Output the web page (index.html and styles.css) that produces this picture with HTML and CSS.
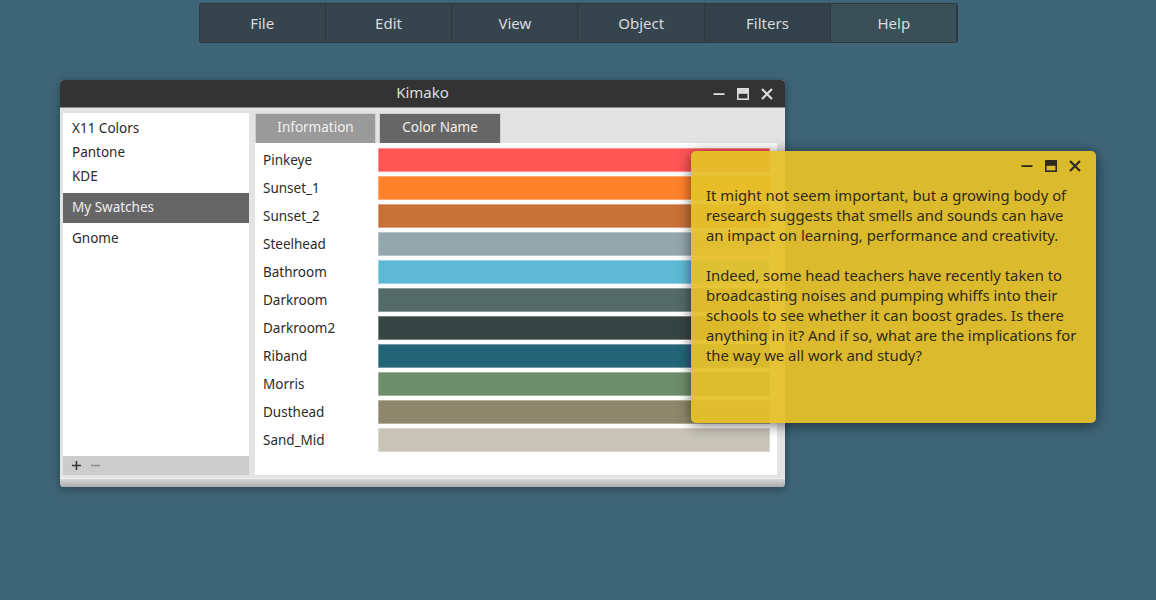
FILE: index.html
```html
<!DOCTYPE html>
<html>
<head>
<meta charset="utf-8">
<link rel="stylesheet" href="styles.css">
</head>
<body>
<div class="desktop">
  <nav class="menubar">
    <div class="menu-item">File</div>
    <div class="menu-item">Edit</div>
    <div class="menu-item">View</div>
    <div class="menu-item">Object</div>
    <div class="menu-item menu-active">Filters</div>
    <div class="menu-item menu-help">Help</div>
  </nav>

  <section class="window">
    <header class="titlebar">
      <span class="title">Kimako</span>
      <div class="controls light">
        <svg class="ctl" viewBox="0 0 14 14"><rect x="1.5" y="6.2" width="11" height="1.8" fill="currentColor"/></svg>
        <svg class="ctl" viewBox="0 0 14 14"><rect x="1.8" y="1.8" width="10.4" height="10.4" fill="none" stroke="currentColor" stroke-width="1.6"/><rect x="1.8" y="1.8" width="10.4" height="5" fill="currentColor"/></svg>
        <svg class="ctl" viewBox="0 0 14 14"><path d="M2 2 L12 12 M12 2 L2 12" stroke="currentColor" stroke-width="2.2" fill="none"/></svg>
      </div>
    </header>
    <div class="win-body">
      <aside class="sidebar">
        <ul class="lib-list">
          <li>X11 Colors</li>
          <li>Pantone</li>
          <li>KDE</li>
          <li class="selected">My Swatches</li>
          <li>Gnome</li>
        </ul>
        <div class="side-tools">
          <svg class="tool" viewBox="0 0 12 12"><path d="M6 1 V11 M1 6 H11" stroke="currentColor" stroke-width="1.6" fill="none"/></svg>
          <svg class="tool dim" viewBox="0 0 12 12"><path d="M1 6 H11" stroke="currentColor" stroke-width="1.4" fill="none"/></svg>
        </div>
      </aside>
      <div class="main">
        <div class="tabs">
          <div class="tab tab-info">Information</div>
          <div class="tab tab-name">Color Name</div>
        </div>
        <div class="swatches">
          <div class="row"><span class="name">Pinkeye</span><span class="sw" style="background:#ff5555"></span></div>
          <div class="row"><span class="name">Sunset_1</span><span class="sw" style="background:#ff822a"></span></div>
          <div class="row"><span class="name">Sunset_2</span><span class="sw" style="background:#c87137"></span></div>
          <div class="row"><span class="name">Steelhead</span><span class="sw" style="background:#93a7ad"></span></div>
          <div class="row"><span class="name">Bathroom</span><span class="sw" style="background:#5ebad4"></span></div>
          <div class="row"><span class="name">Darkroom</span><span class="sw" style="background:#536a67"></span></div>
          <div class="row"><span class="name">Darkroom2</span><span class="sw" style="background:#374542"></span></div>
          <div class="row"><span class="name">Riband</span><span class="sw" style="background:#236577"></span></div>
          <div class="row"><span class="name">Morris</span><span class="sw" style="background:#6e8e6b"></span></div>
          <div class="row"><span class="name">Dusthead</span><span class="sw" style="background:#8f876b"></span></div>
          <div class="row"><span class="name">Sand_Mid</span><span class="sw" style="background:#c8c4b7"></span></div>
        </div>
      </div>
    </div>
    <div class="win-foot"></div>
  </section>

  <section class="note">
    <div class="controls dark note-controls">
      <svg class="ctl" viewBox="0 0 14 14"><rect x="1.5" y="6.2" width="11" height="1.8" fill="currentColor"/></svg>
      <svg class="ctl" viewBox="0 0 14 14"><rect x="1.8" y="1.8" width="10.4" height="10.4" fill="none" stroke="currentColor" stroke-width="1.6"/><rect x="1.8" y="1.8" width="10.4" height="5" fill="currentColor"/></svg>
      <svg class="ctl" viewBox="0 0 14 14"><path d="M2 2 L12 12 M12 2 L2 12" stroke="currentColor" stroke-width="2.2" fill="none"/></svg>
    </div>
    <p>It might not seem important, but a growing body of research suggests that smells and sounds can have an impact on learning, performance and creativity.</p>
    <p>Indeed, some head teachers have recently taken to broadcasting noises and pumping whiffs into their schools to see whether it can boost grades. Is there anything in it? And if so, what are the implications for the way we all work and study?</p>
  </section>
</div>
</body>
</html>
```

FILE: styles.css
```css
* { box-sizing: border-box; }
html, body { margin: 0; padding: 0; }
body {
  width: 1156px;
  height: 600px;
  overflow: hidden;
  background: #3e6577;
  font-family: "Noto Sans", "Open Sans", sans-serif;
}
.desktop {
  position: relative;
  width: 1156px;
  height: 600px;
  padding-top: 3px;
}

/* Menubar */
.menubar {
  display: flex;
  width: 759px;
  height: 40px;
  margin: 0 auto;
  background: #2d3940;
  border-radius: 3px;
  overflow: hidden;
  gap: 1px;
  padding: 1px;
}
.menu-item {
  flex: 1;
  display: flex;
  align-items: center;
  justify-content: center;
  background: #36444d;
  color: #d9dcde;
  font-size: 15px;
  padding-bottom: 1px;
}
.menu-active { background: #33414a; }
.menu-help { background: #3a4f57; }

/* Window */
.window {
  position: absolute;
  left: 60px;
  top: 80px;
  width: 725px;
  height: 407px;
  background: #e3e3e3;
  border-radius: 4px;
  box-shadow: 0 2px 10px rgba(0,0,0,0.35);
  overflow: hidden;
  display: flex;
  flex-direction: column;
}
.titlebar {
  position: relative;
  height: 28px;
  flex: none;
  background: #333333;
  border-bottom: 1px solid #8a8a8a;
  display: flex;
  align-items: center;
  justify-content: center;
  padding-bottom: 3px;
}
.title { color: #dedede; font-size: 15px; }
.controls {
  position: absolute;
  display: flex;
  gap: 10px;
}
.titlebar .controls { right: 11px; top: 7px; }
.controls.light { color: #dcdcdc; }
.controls.dark { color: #2e2a1e; }
.ctl { width: 14px; height: 14px; display: block; }

.win-body {
  display: flex;
  gap: 6px;
  padding: 5px 8px 3px 3px;
  height: 370px;
  flex: none;
}
.sidebar {
  width: 186px;
  background: #ffffff;
  display: flex;
  flex-direction: column;
}
.lib-list {
  list-style: none;
  margin: 0;
  padding: 3px 0 0;
  flex: 1;
}
.lib-list li {
  height: 24px;
  line-height: 24px;
  padding-left: 9px;
  font-size: 13.5px;
  color: #2b2b2b;
}
.lib-list li.selected {
  height: 30px;
  line-height: 28px;
  margin: 5px 0 3px;
  background: #666666;
  color: #eeeeee;
}
.side-tools {
  height: 19px;
  background: #cccccc;
  display: flex;
  align-items: center;
  gap: 8px;
  padding-left: 8px;
}
.tool { width: 11px; height: 11px; display: block; color: #333; }
.tool.dim { color: #8a8a8a; }

.main {
  flex: 1;
  display: flex;
  flex-direction: column;
}
.tabs {
  display: flex;
  gap: 3px;
  height: 30px;
}
.tab {
  display: flex;
  align-items: center;
  justify-content: center;
  font-size: 13.5px;
  border: 1px solid #d0d0d0;
  border-bottom: none;
  padding-bottom: 3px;
}
.tab-info { width: 121px; background: #9a9a9a; color: #f1f1f1; }
.tab-name { width: 122px; background: #666666; color: #f1f1f1; }
.swatches {
  flex: 1;
  background: #ffffff;
  padding-top: 3px;
}
.row {
  display: flex;
  align-items: center;
  height: 28px;
}
.name {
  width: 123px;
  padding-left: 8px;
  font-size: 13.5px;
  color: #2b2b2b;
}
.sw {
  width: 392px;
  height: 24px;
  border: 1px solid rgba(255,255,255,0.35);
}
.win-foot {
  flex: 1;
  background: linear-gradient(#d6d6d6, #a9a9a9);
  border-top: 1px solid #f0f0f0;
}

/* Sticky note */
.note {
  position: absolute;
  left: 691px;
  top: 151px;
  width: 405px;
  height: 272px;
  background: rgba(230, 192, 40, 0.94);
  border-radius: 5px;
  box-shadow: 0 2px 14px rgba(0,0,0,0.55);
  padding: 34px 14px 0 15px;
  color: #2f2a1c;
  font-size: 14.85px;
  line-height: 20px;
}
.note-controls { right: 14px; top: 8px; }
.note p { margin: 0 0 20px; }
```
